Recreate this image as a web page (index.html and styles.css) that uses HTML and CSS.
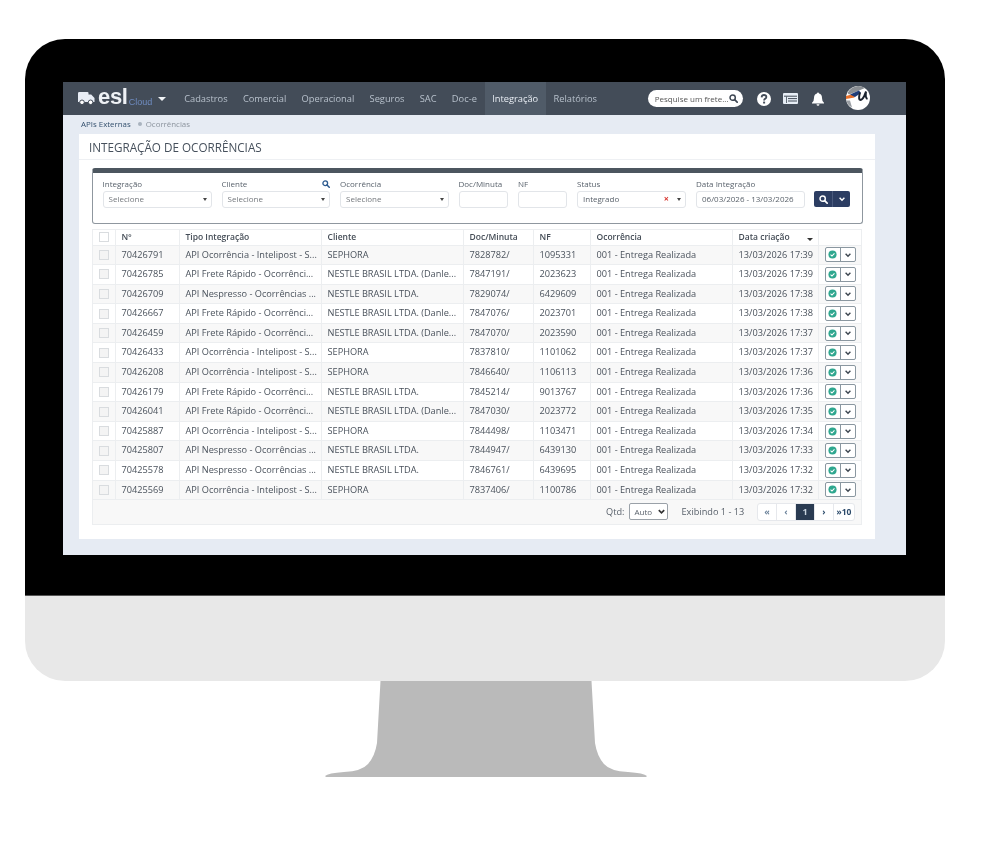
FILE: index.html
```html
<!DOCTYPE html>
<html lang="pt-BR">
<head>
<meta charset="utf-8">
<title>Integração de Ocorrências</title>
<link rel="stylesheet" href="styles.css">
</head>
<body>
<svg class="defs" width="0" height="0">
  <symbol id="i-search" viewBox="0 0 16 16"><circle cx="6.5" cy="6.5" r="4.7" fill="none" stroke="currentColor" stroke-width="2.6"/><path d="M10 10l4.5 4.5" stroke="currentColor" stroke-width="3" stroke-linecap="round"/></symbol>
  <symbol id="i-chev" viewBox="0 0 10 10"><path d="M2 3.5l3 3 3-3" fill="none" stroke="currentColor" stroke-width="1.8"/></symbol>
  <symbol id="i-check" viewBox="0 0 12 12"><circle cx="6" cy="6" r="5.4" fill="#2fa78f"/><path d="M3.4 6.1l1.9 1.9 3.3-3.5" fill="none" stroke="#fff" stroke-width="1.4"/></symbol>
</svg>
<div class="monitor">
  <div class="bezel">
    <div class="screen">
      <header class="nav">
        <div class="brand">
          <svg class="truck" width="17" height="13" viewBox="0 0 17 13"><path d="M0 1.2Q0 0 1.2 0H9.5Q10.5 0 10.5 1V2.5H13.2L16.5 6V10H0Z" fill="#e8edf5"/><circle cx="4" cy="10.3" r="2.3" fill="#fff" stroke="#434c58"/><circle cx="12.6" cy="10.3" r="2.3" fill="#fff" stroke="#434c58"/></svg>
          <span class="esl">esl</span><span class="cloud">Cloud</span>
          <span class="caret"></span>
        </div>
        <nav class="menu">
          <a>Cadastros</a><a>Comercial</a><a>Operacional</a><a>Seguros</a><a>SAC</a><a>Doc-e</a><a class="active">Integração</a><a>Relatórios</a>
        </nav>
        <div class="tools">
          <div class="pill"><span>Pesquise um frete...</span><svg width="9" height="9"><use href="#i-search"/></svg></div>
          <svg class="t-help" width="14" height="14" viewBox="0 0 14 14"><circle cx="7" cy="7" r="7" fill="#fff"/><path d="M4.6 5.3Q4.8 3 7 3t2.4 2Q9.4 6.200 8 6.900 7.100 7.400 7.100 8.500" fill="none" stroke="#434c58" stroke-width="1.800"/><rect x="6.100" y="9.600" width="2" height="1.900" fill="#434c58"/></svg>
          <svg class="t-list" width="15" height="11" viewBox="0 0 15 11"><rect width="15" height="11" rx="1" fill="#e6edf5"/><path d="M1 3.200H14M5 5.600H14M5 8H14" stroke="#434c58"/><path d="M3.500 3.500V10" stroke="#434c58" stroke-width=".8"/></svg>
          <svg class="t-bell" width="12" height="14" viewBox="0 0 12 14"><path d="M6 0.500Q7 0.500 7 1.600Q10 2.400 10 6Q10 9.500 12 10.800V11.500H0V10.800Q2 9.500 2 6Q2 2.400 5 1.600Q5 .5 6 .5Z" fill="#fff"/><path d="M4.500 12.300H7.500Q7.300 13.800 6 13.800T4.500 12.300Z" fill="#fff"/></svg>
          <svg class="t-avatar" width="24" height="24" viewBox="0 0 24 24"><circle cx="12" cy="12" r="12" fill="#fff"/><path d="M1.500 7Q5 .5 12 0Q16 0 19 2L12 5 3 8.500Z" fill="#8b8f94"/><path d="M0 10L9 7.500 8.500 11.500 0 13Z" fill="#e8702a"/><path d="M4 8.500L13 4.500 15 7 9 11Z" fill="#1f3c78"/><path d="M14 6.500Q12.500 12 13.500 13.500Q15.500 15 18 10.500L20 5.500Q19 12 21.500 13" fill="none" stroke="#1c2430" stroke-width="2"/><path d="M.5 14.500H4L6 21.500Q1.500 19.500 .5 14.500Z" fill="#9a9ea3"/></svg>
        </div>
      </header>

      <div class="crumbs"><a>APIs Externas</a><i></i><span>Ocorrências</span></div>

      <main class="panel">
        <h1 class="title">INTEGRAÇÃO DE OCORRÊNCIAS</h1>

        <section class="filters">
          <div class="field">
            <label>Integração</label>
            <div class="input sel">Selecione<b></b></div>
          </div>
          <div class="field">
            <label>Cliente</label>
            <svg class="lookup" width="8" height="8"><use href="#i-search"/></svg>
            <div class="input sel">Selecione<b></b></div>
          </div>
          <div class="field">
            <label>Ocorrência</label>
            <div class="input sel">Selecione<b></b></div>
          </div>
          <div class="field">
            <label>Doc/Minuta</label>
            <div class="input"></div>
          </div>
          <div class="field">
            <label>NF</label>
            <div class="input"></div>
          </div>
          <div class="field">
            <label>Status</label>
            <div class="input sel dark">Integrado<em>×</em><b></b></div>
          </div>
          <div class="field">
            <label>Data Integração</label>
            <div class="input date">06/03/2026 - 13/03/2026</div>
          </div>
          <div class="actions">
            <span><svg width="9" height="9"><use href="#i-search"/></svg></span>
            <span><svg width="8" height="8"><use href="#i-chev"/></svg></span>
          </div>
        </section>

        <section class="grid">
          <div class="row head">
            <div class="c"><span class="box"></span></div><div>Nº</div><div>Tipo Integração</div><div>Cliente</div><div>Doc/Minuta</div><div>NF</div><div>Ocorrência</div><div class="sort">Data criação<i></i></div><div></div>
          </div>
          <div class="row"><div class="c"><span class="box"></span></div><div>70426791</div><div>API Ocorrência - Intelipost - S...</div><div>SEPHORA</div><div>7828782/</div><div>1095331</div><div>001 - Entrega Realizada</div><div>13/03/2026 17:39</div><div class="c"><span class="btns"><span><svg width="9" height="9"><use href="#i-check"/></svg></span><span><svg width="8" height="8"><use href="#i-chev"/></svg></span></span></div></div>
          <div class="row"><div class="c"><span class="box"></span></div><div>70426785</div><div>API Frete Rápido - Ocorrênci...</div><div>NESTLE BRASIL LTDA. (Danle...</div><div>7847191/</div><div>2023623</div><div>001 - Entrega Realizada</div><div>13/03/2026 17:39</div><div class="c"><span class="btns"><span><svg width="9" height="9"><use href="#i-check"/></svg></span><span><svg width="8" height="8"><use href="#i-chev"/></svg></span></span></div></div>
          <div class="row"><div class="c"><span class="box"></span></div><div>70426709</div><div>API Nespresso - Ocorrências ...</div><div>NESTLE BRASIL LTDA.</div><div>7829074/</div><div>6429609</div><div>001 - Entrega Realizada</div><div>13/03/2026 17:38</div><div class="c"><span class="btns"><span><svg width="9" height="9"><use href="#i-check"/></svg></span><span><svg width="8" height="8"><use href="#i-chev"/></svg></span></span></div></div>
          <div class="row"><div class="c"><span class="box"></span></div><div>70426667</div><div>API Frete Rápido - Ocorrênci...</div><div>NESTLE BRASIL LTDA. (Danle...</div><div>7847076/</div><div>2023701</div><div>001 - Entrega Realizada</div><div>13/03/2026 17:38</div><div class="c"><span class="btns"><span><svg width="9" height="9"><use href="#i-check"/></svg></span><span><svg width="8" height="8"><use href="#i-chev"/></svg></span></span></div></div>
          <div class="row"><div class="c"><span class="box"></span></div><div>70426459</div><div>API Frete Rápido - Ocorrênci...</div><div>NESTLE BRASIL LTDA. (Danle...</div><div>7847070/</div><div>2023590</div><div>001 - Entrega Realizada</div><div>13/03/2026 17:37</div><div class="c"><span class="btns"><span><svg width="9" height="9"><use href="#i-check"/></svg></span><span><svg width="8" height="8"><use href="#i-chev"/></svg></span></span></div></div>
          <div class="row"><div class="c"><span class="box"></span></div><div>70426433</div><div>API Ocorrência - Intelipost - S...</div><div>SEPHORA</div><div>7837810/</div><div>1101062</div><div>001 - Entrega Realizada</div><div>13/03/2026 17:37</div><div class="c"><span class="btns"><span><svg width="9" height="9"><use href="#i-check"/></svg></span><span><svg width="8" height="8"><use href="#i-chev"/></svg></span></span></div></div>
          <div class="row"><div class="c"><span class="box"></span></div><div>70426208</div><div>API Ocorrência - Intelipost - S...</div><div>SEPHORA</div><div>7846640/</div><div>1106113</div><div>001 - Entrega Realizada</div><div>13/03/2026 17:36</div><div class="c"><span class="btns"><span><svg width="9" height="9"><use href="#i-check"/></svg></span><span><svg width="8" height="8"><use href="#i-chev"/></svg></span></span></div></div>
          <div class="row"><div class="c"><span class="box"></span></div><div>70426179</div><div>API Frete Rápido - Ocorrênci...</div><div>NESTLE BRASIL LTDA.</div><div>7845214/</div><div>9013767</div><div>001 - Entrega Realizada</div><div>13/03/2026 17:36</div><div class="c"><span class="btns"><span><svg width="9" height="9"><use href="#i-check"/></svg></span><span><svg width="8" height="8"><use href="#i-chev"/></svg></span></span></div></div>
          <div class="row"><div class="c"><span class="box"></span></div><div>70426041</div><div>API Frete Rápido - Ocorrênci...</div><div>NESTLE BRASIL LTDA. (Danle...</div><div>7847030/</div><div>2023772</div><div>001 - Entrega Realizada</div><div>13/03/2026 17:35</div><div class="c"><span class="btns"><span><svg width="9" height="9"><use href="#i-check"/></svg></span><span><svg width="8" height="8"><use href="#i-chev"/></svg></span></span></div></div>
          <div class="row"><div class="c"><span class="box"></span></div><div>70425887</div><div>API Ocorrência - Intelipost - S...</div><div>SEPHORA</div><div>7844498/</div><div>1103471</div><div>001 - Entrega Realizada</div><div>13/03/2026 17:34</div><div class="c"><span class="btns"><span><svg width="9" height="9"><use href="#i-check"/></svg></span><span><svg width="8" height="8"><use href="#i-chev"/></svg></span></span></div></div>
          <div class="row"><div class="c"><span class="box"></span></div><div>70425807</div><div>API Nespresso - Ocorrências ...</div><div>NESTLE BRASIL LTDA.</div><div>7844947/</div><div>6439130</div><div>001 - Entrega Realizada</div><div>13/03/2026 17:33</div><div class="c"><span class="btns"><span><svg width="9" height="9"><use href="#i-check"/></svg></span><span><svg width="8" height="8"><use href="#i-chev"/></svg></span></span></div></div>
          <div class="row"><div class="c"><span class="box"></span></div><div>70425578</div><div>API Nespresso - Ocorrências ...</div><div>NESTLE BRASIL LTDA.</div><div>7846761/</div><div>6439695</div><div>001 - Entrega Realizada</div><div>13/03/2026 17:32</div><div class="c"><span class="btns"><span><svg width="9" height="9"><use href="#i-check"/></svg></span><span><svg width="8" height="8"><use href="#i-chev"/></svg></span></span></div></div>
          <div class="row"><div class="c"><span class="box"></span></div><div>70425569</div><div>API Ocorrência - Intelipost - S...</div><div>SEPHORA</div><div>7837406/</div><div>1100786</div><div>001 - Entrega Realizada</div><div>13/03/2026 17:32</div><div class="c"><span class="btns"><span><svg width="9" height="9"><use href="#i-check"/></svg></span><span><svg width="8" height="8"><use href="#i-chev"/></svg></span></span></div></div>

          <div class="foot">
            <span class="qtd">Qtd:</span>
            <span class="qsel">Auto<svg width="9" height="9"><use href="#i-chev"/></svg></span>
            <span class="count">Exibindo 1 - 13</span>
            <div class="pager"><span>«</span><span>‹</span><span class="on">1</span><span class="next">›</span><span class="next">»10</span></div>
          </div>
        </section>
      </main>
    </div>
  </div>
  <div class="chin"></div>
  <svg class="stand" width="322" height="96" viewBox="0 0 322 96"><path d="M55.500 0H266.500L270 62Q272 75 279 83Q285 90 303 91Q319 92 322 95L321 96H1L0 95Q3 92 19 91Q37 90 43 83Q50 75 52 62Z" fill="#bababa"/></svg>
</div>
</body>
</html>
```
FILE: styles.css
```css
* { box-sizing: border-box; }
html, body { margin: 0; background: #fff; }
body { font-family: "Open Sans", "Liberation Sans", sans-serif; font-size: 9px; color: #4d5560; }
.defs { position: absolute; }
.monitor { width: 920px; margin: 39px 0 0 25px; }
.bezel { background: #000; border-radius: 40px 40px 0 0; padding: 43px 39px 40px 38px; height: 556px; }
.screen { height: 473px; background: #e6ebf3; filter: blur(.35px); overflow: hidden; }
.chin { height: 86px; background: #e8e8e8; border-top: 1px solid #555; border-radius: 0 0 40px 40px; }
.stand { display: block; margin-left: 300px; }

.nav { height: 33px; background: #434c58; display: flex; align-items: stretch; }
.brand { width: 113.500px; padding-left: 15px; display: flex; align-items: center; flex: none; }
.truck { flex: none; margin-right: 3px; }
.esl { font: bold 22px/1 "Liberation Sans", sans-serif; color: #eef1f5; margin-top: -3px; letter-spacing: -.3px; }
.cloud { font: 9px/1 "Liberation Sans", sans-serif; color: #6f8cc0; margin: 7px 0 0 1px; }
.caret { border: 4.500px solid transparent; border-top: 4.500px solid #f1f3f6; border-bottom: 0; margin-left: 6px; }
.menu { display: flex; }
.menu a { padding: 0 7.650px; line-height: 33px; font-size: 9.300px; color: #b7c0cb; }
.menu a.active { background: #505b68; color: #e8edf3; }
.tools { position: relative; flex: 1; display: flex; align-items: center; }
.pill { margin-left: 43px; width: 95px; height: 17px; border-radius: 9px; background: #fff; color: #555; font-size: 8px; display: flex; align-items: center; justify-content: space-between; padding: 0 5px 0 7px; white-space: nowrap; }
.pill svg { flex: none; color: #3e4753; }
.t-help { margin-left: 14px; }
.t-list { margin-left: 12px; }
.t-bell { margin-left: 14px; }
.t-avatar { margin-left: 22px; margin-top: -2px; }

.crumbs { height: 19px; padding: 0 0 2px 18px; display: flex; align-items: center; font-size: 7.900px; color: #8b939d; }
.crumbs a { color: #34506e; }
.crumbs i { width: 4px; height: 4px; border-radius: 50%; background: #a9b3bf; margin: 0 4px 0 7px; }

.panel { height: 405px; margin: 0 31px 0 16px; background: #fff; padding-bottom: 15px; }
.title { margin: 0; height: 26px; padding: 5px 0 0 10px; font-size: 11.700px; line-height: 17px; font-weight: 400; color: #46505c; border-bottom: 1px solid #eef0f3; white-space: nowrap; }

.filters { margin: 8px 12px 0 13px; height: 56px; border: 1px solid #8f979f; border-top: 5px solid #4c565f; border-radius: 3px; padding: 5px 0 0 9.500px; display: grid; grid-template-columns: 109px 108.500px 108.500px 49.500px 49px 109px 109px auto; column-gap: 10px; align-items: start; }
.field { position: relative; min-width: 0; }
.field label { display: block; font-size: 8px; line-height: 11px; margin-bottom: 2px; color: #5a636d; white-space: nowrap; }
.lookup { position: absolute; right: 0; top: 2px; color: #2c5a8f; }
.input { position: relative; height: 17px; border: 1px solid #e2e5e9; border-radius: 3px; padding-left: 5px; font-size: 8px; line-height: 14px; color: #75797e; white-space: nowrap; }
.input.dark, .input.date { color: #5a626b; }
.input b { position: absolute; right: 4px; top: 6px; border: 2.200px solid transparent; border-top: 3.500px solid #444; border-bottom: 0; }
.input em { position: absolute; right: 16px; top: 0; font-style: normal; font-weight: 700; color: #d8352f; font-size: 9px; }
.actions { margin-top: 13px; margin-left: -1px; width: 36px; height: 16px; background: #2c3d62; border-radius: 2px; display: flex; color: #fff; }
.actions span { flex: none; width: 18px; height: 16px; display: flex; align-items: center; justify-content: center; }
.actions span + span { border-left: 1px solid #4a5a7d; }

.grid { margin: 5px 13px 0; }
.row { display: grid; grid-template-columns: 23px 64px 142px 142px 70px 57px 142px 86px 43px; height: 19.600px; align-items: stretch; border: 1px solid #eceef0; border-width: 0 0 1px 1px; }
.row > div { padding-left: 5.500px; line-height: 18px; font-size: 9.200px; color: #4a525c; white-space: nowrap; border-right: 1px solid #eceef0; overflow: hidden; }
.row > div.c { padding: 0; display: flex; align-items: center; justify-content: center; }
.row:nth-child(even) { background: #f8f8f8; }
.head { height: 16.500px; border-top: 1px solid #eceef0; }
.row.head > div { line-height: 14px; font-weight: 600; font-size: 8.500px; color: #444c56; }
.box { display: block; width: 10px; height: 10px; border: 1px solid #d9dcdf; background: #fff; }
.row:not(.head) .box { background: #f4f4f4; }
.sort { position: relative; }
.sort i { position: absolute; right: 5px; top: 8px; border: 3px solid transparent; border-top: 3px solid #333; border-bottom: 0; }
.btns { display: flex; width: 31px; height: 15px; border: 1px solid #8a97a0; border-radius: 2px; background: #fff; }
.btns span { flex: 1; display: flex; align-items: center; justify-content: center; color: #3d4650; }
.btns span + span { border-left: 1px solid #8a97a0; }

.foot { height: 25px; display: flex; align-items: center; background: #f8f8f8; border: 1px solid #eceef0; border-top: 0; padding: 0 6px 1px 513px; font-size: 9.200px; color: #59616b; white-space: nowrap; }
.qsel { flex: none; width: 39px; height: 17px; border: 1px solid #9aa1a8; border-radius: 2px; background: #fff; margin-left: 5px; padding-left: 4px; font-size: 8px; line-height: 15px; display: flex; justify-content: space-between; align-items: center; }
.qsel svg { color: #333; margin-right: 1px; }
.count { flex: none; margin-left: 13px; }
.pager { flex: none; display: flex; margin-left: auto; height: 18px; border: 1px solid #e6e8ec; border-radius: 3px; background: #fff; font-size: 9px; font-weight: 700; line-height: 16px; color: #6a8199; }
.pager span { width: 19px; text-align: center; border-right: 1px solid #e6e8ec; }
.pager span:last-child { border-right: 0; width: 20px; font-size: 8.500px; }
.pager .on { background: #2a3b52; color: #c9d3de; }
.pager .next { color: #2b4a6a; }
```
